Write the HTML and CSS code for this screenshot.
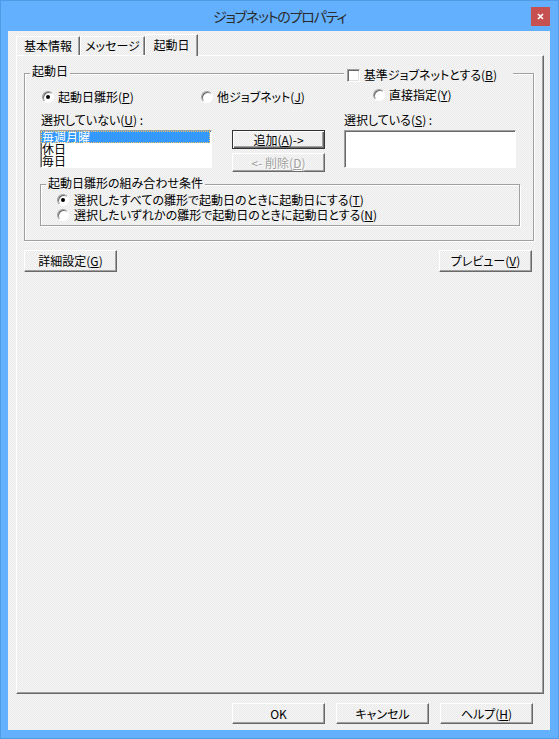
FILE: index.html
```html
<!DOCTYPE html>
<html>
<head>
    <meta charset="utf-8">
    <link rel="stylesheet" href="styles.css">
</head>

<body>
    <div class="window">
        <div class="titlebar">
            <span></span>
            <span class="title">ジョブネットのプロパティ</span>
            <span class="close">
                <svg width="7" height="7" viewBox="0 0 7 7"><path d="M1 1L6 6M6 1L1 6" stroke="#fff" stroke-width="1.6"/></svg>
            </span>
        </div>

        <div class="content">
            <div class="tabs">
                <div class="tab tab-info">基本情報</div>
                <div class="tab tab-msg">メッセージ</div>
                <div class="tab tab-day active">起動日</div>
            </div>

            <div class="panel">
                <div class="group">
                    <div class="group-head">
                        <span class="group-title">起動日</span>
                        <label class="check-head"><span class="checkbox"></span><span>基準ジョブネットとする(<u>B</u>)</span></label>
                    </div>

                    <div class="radio-row">
                        <label class="opt opt-calendar"><span class="radio checked"></span><span>起動日雛形(<u>P</u>)</span></label>
                        <label class="opt opt-other"><span class="radio"></span><span>他ジョブネット(<u>J</u>)</span></label>
                        <label class="opt opt-direct"><span class="radio"></span><span>直接指定(<u>Y</u>)</span></label>
                    </div>

                    <div class="pick">
                        <div class="pick-label first">選択していない(<u>U</u>) :</div>
                        <div></div>
                        <div class="pick-label">選択している(<u>S</u>) :</div>

                        <ul class="listbox">
                            <li class="selected">毎週月曜</li>
                            <li>休日</li>
                            <li>毎日</li>
                        </ul>
                        <div class="move">
                            <button class="btn default">追加(<u>A</u>)-&gt;</button>
                            <button class="btn" disabled>&lt;- 削除(<u>D</u>)</button>
                        </div>
                        <ul class="listbox"></ul>
                    </div>

                    <div class="group inner">
                        <div class="inner-title">起動日雛形の組み合わせ条件</div>
                        <label class="opt cond first"><span class="radio checked"></span><span>選択したすべての雛形で起動日のときに起動日にする(<u>T</u>)</span></label>
                        <label class="opt cond"><span class="radio"></span><span>選択したいずれかの雛形で起動日のときに起動日とする(<u>N</u>)</span></label>
                    </div>
                </div>

                <div class="panel-buttons">
                    <button class="btn tall">詳細設定(<u>G</u>)</button>
                    <button class="btn tall">プレビュー(<u>V</u>)</button>
                </div>
            </div>

            <div class="dialog-buttons">
                <button class="btn">OK</button>
                <button class="btn">キャンセル</button>
                <button class="btn">ヘルプ(<u>H</u>)</button>
            </div>
        </div>
    </div>
</body>

</html>
```

FILE: styles.css
```css
body{
    margin: 0;
    font-family: "Noto Sans CJK JP", "Liberation Sans", sans-serif;
    font-size: 12px;
    color: #000;
    font-feature-settings: "palt";
}
u{
    text-underline-offset: 1px;
}

/* dithered dialog face, pinned to the viewport so every piece lines up */
.content, .tab, .group-title, .check-head, .inner-title, .btn{
    background: repeating-conic-gradient(#f5f5f5 0 25%, #ebebeb 0 50%) 0 0 / 2px 2px fixed;
}

/* window frame */
.window{
    width: 559px;
    height: 739px;
    box-sizing: border-box;
    border: 1px solid #4f9be4;
    background-color: #63b0ff;
    display: flex;
    flex-direction: column;
}
.titlebar{
    height: 30px;
    display: grid;
    grid-template-columns: 1fr auto 1fr;
    align-items: center;
}
.title{
    font-size: 14px;
    letter-spacing: -1.2px;
    color: #2b2b2b;
}
.close{
    justify-self: end;
    width: 19px;
    height: 19px;
    margin-right: 8px;
    background-color: #c75050;
    display: flex;
    align-items: center;
    justify-content: center;
}

.content{
    flex: 1;
    margin: 0 8px 8px 7px;
    padding-top: 3px;
}

/* tabs */
.tabs{
    display: flex;
    align-items: flex-end;
    height: 21px;
    margin-left: 8px;
}
.tab{
    height: 19px;
    line-height: 18px;
    box-sizing: border-box;
    text-align: center;
    border-top: 1px solid #fff;
    border-left: 1px solid #fff;
    border-right: 1px solid #696969;
    box-shadow: inset -1px 0 0 #a0a0a0;
}
.tab-info{ width: 64px; }
.tab-msg{ width: 65px; }
.tab-day{ width: 53px; }
.tab.active{
    height: 22px;
    line-height: 19px;
    margin-bottom: -1px;
    position: relative;
    z-index: 1;
}

.panel{
    width: 528px;
    height: 639px;
    margin-left: 8px;
    box-sizing: border-box;
    padding: 17px 9px 0 7px;
    border: 1px solid;
    border-color: #fff #696969 #696969 #fff;
    box-shadow: inset -1px -1px 0 #a0a0a0;
}

/* group boxes */
.group{
    border: 1px solid #a0a0a0;
    box-shadow: inset 1px 1px 0 #fff, 1px 1px 0 #fff;
    padding: 0 13px 14px 15px;
}
.group-head{
    display: flex;
    justify-content: space-between;
    align-items: flex-start;
    height: 14px;
    margin: -10px -13px 0 -15px;
    line-height: 14px;
}
.group-title{
    margin-left: 5px;
    padding: 0 2px;
}
.check-head{
    display: flex;
    align-items: center;
    gap: 4px;
    margin: 4px 20px 0 0;
    padding: 0 16px 0 3px;
}
.checkbox{
    width: 13px;
    height: 13px;
    box-sizing: border-box;
    background-color: #fff;
    border: 1px solid;
    border-color: #a0a0a0 #fff #fff #a0a0a0;
    box-shadow: inset 1px 1px 0 #696969, inset -1px -1px 0 #e3e3e3;
}

.radio-row{
    display: flex;
    align-items: flex-start;
    margin-top: 12px;
    line-height: 14px;
}
.opt{
    display: flex;
    align-items: center;
    gap: 4px;
}
.opt-calendar{
    margin-left: 2px;
    width: 159px;
}
.opt-other{
    width: 172px;
}
.opt-direct{
    margin-top: -2px;
}
.radio{
    width: 12px;
    height: 12px;
    box-sizing: border-box;
    border-radius: 50%;
    border: 1px solid;
    border-color: #a0a0a0 #fff #fff #a0a0a0;
    box-shadow: inset 1px 1px 0 #696969;
    background-color: #fff;
    display: flex;
    align-items: center;
    justify-content: center;
}
.radio.checked::after{
    content: "";
    width: 4px;
    height: 4px;
    border-radius: 50%;
    background-color: #000;
}

/* list pickers */
.pick{
    display: grid;
    grid-template-columns: 192px 112px 172px;
    row-gap: 3px;
    margin-top: 9px;
    line-height: 14px;
}
.pick-label.first{
    margin-left: 1px;
}
.listbox{
    width: 172px;
    height: 38px;
    box-sizing: border-box;
    margin: 0;
    padding: 0;
    list-style: none;
    background-color: #fff;
    border: 1px solid;
    border-color: #a0a0a0 #fff #fff #a0a0a0;
    box-shadow: inset 1px 1px 0 #696969;
    line-height: 12px;
}
.listbox li{
    padding-left: 1px;
    margin-right: 1px;
}
.listbox li.selected{
    background-color: #3399ff;
    color: #fff;
    outline: 1px dotted #f6c26b;
    outline-offset: -1px;
}
.move{
    display: flex;
    flex-direction: column;
    gap: 4px;
}

.group.inner{
    margin-top: 12px;
    padding: 0 0 3px 16px;
}
.inner-title{
    width: fit-content;
    margin: -9px 0 0 -11px;
    padding: 0 2px;
    line-height: 14px;
}
.cond{
    gap: 5px;
    line-height: 15px;
}
.cond.first{
    margin-top: 2px;
}

/* buttons */
.btn{
    width: 93px;
    height: 21px;
    padding: 0;
    box-sizing: border-box;
    font: inherit;
    line-height: 1;
    color: #000;
    border: 1px solid;
    border-color: #fff #696969 #696969 #fff;
    box-shadow: inset -1px -1px 0 #a0a0a0;
}
.move .btn{
    height: 19px;
}
.btn.default{
    border-color: #333;
    box-shadow: inset 1px 1px 0 #fff, inset -1px -1px 0 #696969, inset -2px -2px 0 #a0a0a0;
}
.btn:disabled{
    color: #a0a0a0;
    text-shadow: 1px 1px 0 #fff;
}
.btn.tall{
    height: 22px;
}

.panel-buttons{
    display: flex;
    justify-content: space-between;
    margin-top: 9px;
    padding-right: 2px;
}
.dialog-buttons{
    display: flex;
    justify-content: flex-end;
    gap: 11px;
    margin-top: 9px;
    padding-right: 17px;
}
```
